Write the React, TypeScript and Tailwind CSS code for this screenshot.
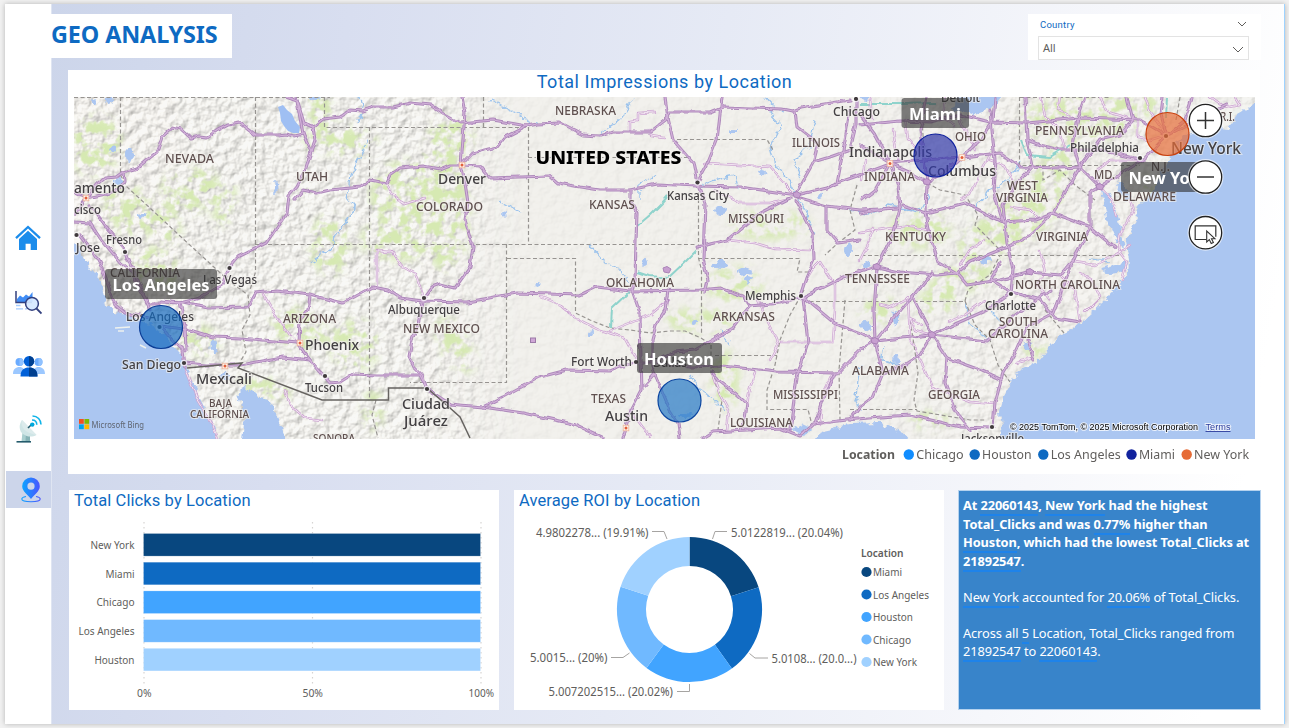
import React from "react";

type Label = [string, number, number, number, number];

const SEGOE = "'Noto Sans', 'Open Sans', sans-serif";
const DIN = "font-['Roboto','Noto_Sans',sans-serif]";
const UI = "font-['Noto_Sans','Open_Sans',sans-serif]";

const STATES: Label[] = [
  ["NEVADA", 165, 163, 49, 12],
  ["UTAH", 296, 181, 32, 12],
  ["CALIFORNIA", 110, 277, 70, 12],
  ["ARIZONA", 283, 323, 53, 12],
  ["NEW MEXICO", 403, 333, 77, 12],
  ["COLORADO", 416, 211, 67, 12],
  ["BAJA", 209, 407, 23, 10],
  ["CALIFORNIA", 190, 418, 59, 10],
  ["SONORA", 313, 442, 42, 10.5],
  ["NEBRASKA", 555, 115, 61, 12],
  ["KANSAS", 589, 209, 46, 12],
  ["MISSOURI", 728, 223, 56, 12],
  ["OKLAHOMA", 606, 287, 68, 12],
  ["ARKANSAS", 713, 321, 62, 12],
  ["TEXAS", 591, 403, 35, 12],
  ["MISSISSIPPI", 773, 399, 65, 12],
  ["LOUISIANA", 730, 427, 63, 12],
  ["ILLINOIS", 792, 147, 48, 12],
  ["INDIANA", 864, 181, 51, 12],
  ["OHIO", 955, 141, 31, 12],
  ["PENNSYLVANIA", 1035, 135, 89, 12],
  ["MD.", 1094, 179, 21, 12],
  ["N.J.", 1151, 171, 19, 12],
  ["DELAWARE", 1113, 201, 63, 12],
  ["R.I.", 1220, 121, 15, 12],
  ["WEST", 1007, 190, 31, 12],
  ["VIRGINIA", 996, 202, 52, 12],
  ["KENTUCKY", 885, 241, 61, 12],
  ["VIRGINIA", 1036, 241, 52, 12],
  ["TENNESSEE", 845, 283, 65, 12],
  ["NORTH CAROLINA", 1015, 289, 105, 12],
  ["SOUTH", 999, 326, 39, 12],
  ["CAROLINA", 988, 338, 60, 12],
  ["ALABAMA", 852, 375, 57, 12],
  ["GEORGIA", 928, 399, 52, 12],
];

const CITIES: Label[] = [
  ["amento", 74, 192.5, 51, 14],
  ["cisco", 74, 214, 27, 12],
  ["Fresno", 106, 244, 36, 12],
  ["Jose", 76, 252, 24, 12],
  ["Las Vegas", 203, 284, 54, 12],
  ["Los Angeles", 126, 321, 68, 12],
  ["San Diego", 122, 369, 59, 12],
  ["Mexicali", 196, 384, 56, 14.5],
  ["Phoenix", 305, 350, 54, 14.5],
  ["Tucson", 305, 392, 38, 12],
  ["Albuquerque", 388, 314, 72, 12],
  ["Ciudad", 402, 409, 48, 14.5],
  ["Juárez", 404, 426, 44, 14.5],
  ["Denver", 438, 184, 48, 14.5],
  ["Kansas City", 667, 200, 62, 12],
  ["Memphis", 745, 300, 51, 12],
  ["Fort Worth", 571, 366, 61, 12],
  ["Dallas", 653, 367, 34, 12],
  ["Austin", 605, 421, 43, 14.5],
  ["Chicago", 833, 116, 47, 12],
  ["Indianapolis", 849, 157, 83, 14],
  ["Detroit", 941, 102, 39, 12],
  ["Columbus", 928, 176, 68, 14],
  ["Philadelphia", 1070, 152, 69, 12],
  ["New York", 1171, 154, 70, 15.5],
  ["Charlotte", 985, 310, 51, 12],
  ["Jacksonville", 961, 443, 63, 12],
];

const DOTS: [number, number][] = [
  [76.5, 235], [125, 252], [229.5, 268], [424, 298], [184, 363], [325, 376], [427, 389],
  [697.5, 182.5], [636, 362], [801, 296], [1011, 294], [992, 427], [856, 99], [1140, 158], [159.5, 327], [1166, 136],
];

const CAPITALS: [number, number][] = [
  [86, 198], [300, 343], [225, 366], [462, 165], [890, 163.5], [962, 157.5], [626, 428],
];

const HIGHWAYS = [
  "74,215 86,198 98,184 105,178 117,177 124,172 137,168 157,152 162,137 173,127 181,129 191,138 200,136 207,137 218,130 228,125 240,123 247,128 256,135 278,135 286,134 295,136 303,134",
  "74,192 86,198 110,193 125,183 124,172",
  "286,97 297,101 303,134 311,152 305,172 297,187 289,196 287,213 276,228 275,230 266,243 250,251 238,257 229,268 222,285 200,298 180,303 162,301",
  "296,97 300,110 304,123 313,127 315,140 311,152",
  "304,123 313,127 323,119 340,117 350,110 362,111 374,107 393,107 410,103 430,105 445,115 460,123 493,120 527,126 537,124 560,123 583,135 600,136 613,132 650,132 668,118 670,112 710,112 722,107 783,109 793,111 800,108 850,100",
  "295,200 304,190 317,193 330,190 360,187 370,180 386,183 390,175 400,168 423,166 440,169 450,165 462,165 480,166 490,178 550,176 558,183 580,187 600,190 630,190 657,184 677,185 697,186 740,187 783,193 797,195 827,188 837,183 860,175 890,164",
  "462,97 465,113 461,165 465,183 468,203 465,220 473,247 470,267 455,288 440,284 432,287 424,298 418,325 412,340 409,357 414,367 422,375 427,389",
  "462,163 472,153 497,147 505,137 527,126",
  "160,302 183,303 207,308 247,307 255,293 277,291 310,295 343,303 373,287 388,290 400,298 424,301 467,302 517,293 580,295 597,287 630,291 700,290 720,288 743,296 750,306 780,303 803,297 843,277 877,267 900,272 937,275 957,273 967,285 1000,280 1030,272 1060,275 1073,260",
  "74,222 90,223 100,238 120,262 132,272 140,290 148,304 160,304",
  "80,235 92,250 102,268 108,285 115,305 125,313 150,318",
  "90,205 105,225 125,250 140,285 150,310",
  "160,325 183,328 213,337 240,338 297,343 310,360 323,375 330,383 340,382 353,374 377,375 420,375 427,389 450,404 483,407 523,413 573,424 603,438",
  "184,363 207,365 240,365 283,357 310,360",
  "310,296 308,310 300,320 299,343",
  "162,328 172,340 183,350 185,368",
  "180,303 185,325 186,350",
  "483,407 503,397 540,377 567,370 610,371 633,362 655,362 690,367 723,366 777,372 837,373 860,350 875,341 930,335 987,310 1011,292",
  "630,190 630,200 637,213 636,240 635,280 632,290 640,313 641,360 642,390 630,413 623,438",
  "668,290 665,310 656,325 652,340 652,367 670,410 678,423 680,438",
  "655,362 675,352 695,350 712,340 733,328 745,312 750,306",
  "655,374 645,385",
  "697,247 727,240 760,213 790,198",
  "697,183 705,203 703,260 708,280 705,293",
  "722,97 717,140 707,165 697,183",
  "665,97 668,118 673,140 693,163 697,183",
  "795,195 813,163 818,143 797,127 795,111",
  "813,162 830,157 850,150 856,125 856,99",
  "795,200 813,233 814,260 806,278 800,296",
  "797,197 827,206 860,210 900,208",
  "827,206 827,230 838,243 860,240",
  "837,183 845,140 850,110",
  "803,297 808,343 797,377 790,430",
  "803,297 833,322 860,333 875,341 883,373 873,397 860,407 850,420",
  "835,373 825,395 815,424",
  "712,372 718,380 735,393 747,404 745,418 740,430",
  "703,438 713,432 780,428 800,436 813,424 847,420 880,417 910,415 960,427 991,428",
  "932,335 947,358 980,370 1002,380",
  "947,358 945,383 957,415 970,430",
  "932,335 987,341 1010,320 1030,305 1050,290",
  "932,335 913,297 933,272",
  "932,335 920,355 905,365 883,373",
  "875,341 874,310 877,267 893,235 900,208",
  "875,341 905,305 913,297",
  "993,428 995,403 1003,373 1017,350 1027,327 1053,313 1063,287 1073,260 1090,227 1090,193 1100,187 1143,160 1166,136 1200,118 1227,105",
  "860,115 875,135 890,163 898,185 900,208",
  "890,163 925,160 962,157 1000,153 1020,167 1060,168 1080,167 1100,187",
  "890,163 910,172 927,182 945,172 962,157 980,140 993,120 995,97",
  "927,182 926,213 903,206",
  "926,213 930,235 938,262 957,273",
  "927,97 920,130 927,180",
  "860,125 900,121 930,122 960,115 990,122 1027,123 1080,118 1140,120 1166,135",
  "926,213 965,203 1003,222",
  "1025,97 1027,140 1033,166 1015,185 1003,205 1007,243 1013,270 1011,293",
  "990,110 995,160 993,190 1003,222",
  "1127,97 1133,120 1120,135 1100,140 1080,167 1053,213 1030,235 1007,247 970,262 957,273",
  "1003,222 1035,220 1053,213 1090,227 1115,248",
  "1027,140 1040,145 1060,150 1100,150 1143,160",
  "1080,167 1073,145 1078,118 1085,97",
  "1011,293 990,280 1000,262",
  "1027,340 1034,360",
  "1011,292 1040,300 1055,318 1080,322",
  "860,145 890,163 875,190 862,200",
  "860,213 890,208",
  "1166,136 1160,115 1162,97",
  "1166,136 1185,120 1192,97",
];

const MINOR = [
  "264,295 275,315 290,335 300,345",
  "377,285 377,251 392,252 400,265 415,273 424,298",
  "386,183 395,198 405,204 425,198",
  "185,370 197,398 210,420 218,438",
  "285,390 290,405 305,418 322,420",
  "650,437 630,410",
  "541,297 560,305 575,318 600,330 625,338 637,360",
  "610,331 650,315 668,300",
  "705,163 740,165 770,167 785,185 795,195",
  "715,190 740,203 770,203 790,198",
  "727,240 755,243 775,249 810,250",
  "665,137 650,135 650,130",
  "630,130 630,122 637,121 637,113 655,112",
  "803,285 812,270 820,262 835,285 835,310 833,342",
  "780,342 833,342",
  "757,300 772,330 778,345 770,360",
  "712,373 720,395 728,410 726,430",
  "747,404 750,388 755,373",
  "820,425 822,395 833,373",
  "860,232 885,228 905,226 930,230",
  "880,305 890,308 905,300 908,297 910,340 925,370 932,388 970,402 995,404",
  "960,265 970,250 985,240",
  "860,260 870,240 875,228",
  "1040,250 1045,272 1038,285 1050,300",
  "1060,275 1075,290 1080,322",
  "1063,287 1060,300 1052,312",
  "1080,272 1092,280 1100,297 1085,312",
  "1073,262 1095,265 1110,258 1130,245",
  "1130,200 1133,212 1120,235 1118,250 1127,262 1122,280",
  "945,97 943,118 955,125",
  "870,97 872,118",
  "865,160 862,180",
  "893,130 898,160",
  "905,120 908,138 922,155",
  "960,120 975,150",
  "990,155 970,195 960,200",
  "1040,97 1045,115 1060,130 1065,150",
  "1060,97 1058,110 1075,118",
  "1100,97 1108,112 1133,120",
  "1145,97 1150,112 1166,135 1150,140 1138,138 1138,122",
  "1100,187 1095,172 1110,160 1143,160",
  "1100,187 1112,200 1116,215",
  "1010,207 1030,210 1038,218",
  "1013,180 1005,165 990,160",
  "948,322 965,315 985,300",
  "932,335 915,330 910,318 922,325",
  "1020,360 1034,358 1017,363",
  "1210,97 1225,108 1240,105 1235,97",
];

const BORDERS = [
  "74,97.5 330,97.5",
  "1020,97.5 1110,97.5",
  "120.5,97 120.5,175 127,187 150,208 180,236 228,280 248,295 250,315 242,330 246,352 240,362",
  "255.5,97 255.5,272 250,290",
  "324.5,97 324.5,127.5 430,127.5 528,127.5",
  "369.5,127 369.5,398",
  "255,244.5 697,244.5",
  "483.5,97 483.5,127",
  "528.5,127 528.5,244",
  "528,157.5 690,157.5",
  "506.5,244 506.5,382.5 410,382.5",
  "507,258.5 575.5,258.5 575.5,313 590,320 610,328 630,330 650,333 670,331 685,331 701,338 712,345",
  "677,139.5 767,139.5 773,150",
  "698.5,186 698.5,258 701.5,270 701.5,335",
  "698,258.5 800,258.5 797,272 808,272",
  "711,345 711,373 722,400 718,430",
  "715,355.5 777,355.5",
  "804,290 790,315 780,340 775,365 767,390 767,409.5 808,409.5 812,425",
  "845,300 839,370 840,420",
  "803,301.5 965,301.5",
  "907,301 914,345 918,373 914,400 917,411 970,420 985,420",
  "850,409.5 917,409.5",
  "965,301 975,325 990,340 998,365 1010,382",
  "1045,310 1064,333",
  "855,255.5 1120,255.5",
  "1019.5,97 1019.5,165.5 1140,165.5",
  "965,301 968,290 990,275 1000,255",
  "857,185 850,210 855,230 838,243 825,255",
  "927,183 940,190 965,195 978,215 975,225 1000,250",
  "922,120 925,165",
  "1043,165 1043,180 1060,170 1075,185 1095,200",
  "1180,97 1176,120",
  "376,400 372,415 378,438",
];

const RIVERS = [
  "369,140 360,155 350,175 347,200 355,210 340,230 330,250 310,262",
  "359,97 362,112 357,122",
  "635,97 620,120 600,135",
  "540,125 510,110 490,100",
  "590,246 605,262 620,270 630,285",
  "640,200 640,183 655,175",
  "700,186 720,178 735,175 740,190",
  "768,112 780,125 770,145 775,165 790,180 795,195 805,210 815,235",
  "800,178 795,160 810,145 815,120",
  "765,97 775,108 785,112",
  "965,301 970,325 990,340",
  "850,210 870,214 890,205 920,212 930,195",
  "1020,160 1010,180 990,190 975,210",
  "720,330 730,345",
  "690,375 700,390 715,400 725,410",
  "884,345 882,360 900,365",
  "500,200 520,212",
  "1090,260 1110,262",
  "1000,320 990,310",
  "860,365 856,395 860,410",
];

const GREENS: [number, number, number, number, number][] = [
  [95, 145, 26, 30, 20], [130, 210, 30, 22, 45], [190, 190, 22, 30, 80], [225, 205, 10, 22, 15],
  [320, 110, 12, 20, 0], [340, 140, 38, 14, 5], [410, 195, 40, 35, 0], [445, 215, 25, 55, 0],
  [450, 140, 22, 25, 40], [400, 240, 40, 20, 0], [300, 330, 30, 20, 30], [355, 345, 25, 25, 0],
  [200, 340, 20, 14, 20], [155, 268, 25, 20, 30], [330, 245, 20, 30, 0], [265, 388, 28, 10, 10],
  [455, 345, 14, 30, -30], [770, 225, 40, 14, 0], [735, 285, 28, 18, 0], [960, 280, 35, 14, -20],
  [1010, 225, 60, 22, -30], [1045, 185, 50, 18, -55], [1080, 120, 60, 22, 0], [940, 300, 25, 14, -20],
  [1130, 105, 30, 14, 0], [700, 320, 35, 12, 0], [1035, 350, 12, 8, 0], [920, 230, 30, 18, 0],
  [880, 310, 20, 12, 0], [440, 180, 20, 40, 0], [930, 420, 20, 8, 0],
  [725, 380, 14, 30, 0], [373, 410, 10, 20, 0], [165, 225, 20, 14, 60], [1150, 190, 10, 14, 0],
];

const LAKES: [number, number, number, number][] = [
  [130, 155, 4, 6], [112, 149, 4, 2.5], [94, 101, 3, 3], [109, 100, 3, 4], [276, 188, 2.5, 6], [119, 182, 4, 3],
  [214, 346, 3.5, 7], [225, 375, 5, 3], [733, 131, 4, 2], [720, 210, 5, 4], [762, 172, 5, 3], [504, 213, 4, 1.5],
  [720, 265, 7, 4], [745, 272, 6, 4], [645, 262, 3, 4], [848, 250, 4, 6], [865, 326, 5, 4], [896, 360, 3, 3],
  [1028, 346, 4, 5], [896, 318, 3, 6], [867, 265, 3, 4], [695, 322, 3, 3], [538, 284, 2.5, 3], [820, 195, 3, 3],
  [987, 260, 5, 3], [685, 415, 6, 3], [592, 334, 3, 2], [748, 280, 5, 3], [141, 216, 3, 4], [315, 97, 5, 3],
];

function Road({ d, minor }: { d: string[]; minor?: boolean }) {
  return (
    <g fill="none" strokeLinejoin="round" strokeLinecap="round" filter="url(#wiggle)">
      {d.map((p, i) => (
        <polyline key={"o" + i} points={p} stroke={minor ? "#cda6d2" : "#ae8abb"} strokeWidth={minor ? 2.4 : 3.1} />
      ))}
      {d.map((p, i) => (
        <polyline key={"i" + i} points={p} stroke={minor ? "#f6ecf5" : "#d3b2da"} strokeWidth={minor ? 0.9 : 1.2} />
      ))}
    </g>
  );
}

function MapText({ items, fill }: { items: Label[]; fill: string }) {
  return (
    <g fontFamily={SEGOE} fill={fill} fontWeight="500" stroke="#f3f1ee" strokeWidth={2.2} strokeOpacity={0.6} paintOrder="stroke">
      {items.map(([t, x, y, w, s]) => (
        <text key={t + x} x={x} y={y} fontSize={s} textLength={w} lengthAdjust="spacingAndGlyphs">
          {t}
        </text>
      ))}
    </g>
  );
}

function Bubble({ x, y, fill, stroke }: { x: number; y: number; fill: string; stroke: string }) {
  return <circle cx={x} cy={y} r={21.5} fill={fill} fillOpacity={0.7} stroke={stroke} strokeWidth={1.2} />;
}

function Tag({ x, y, w, tx, tw, text }: { x: number; y: number; w: number; tx: number; tw: number; text: string }) {
  return (
    <g>
      <rect x={x} y={y} width={w} height={30} rx={3} fill="#303030" fillOpacity={0.62} />
      <text x={tx} y={y + 22} fontFamily={SEGOE} fontSize={16.5} fontWeight={700} fill="#fff" textLength={tw} lengthAdjust="spacingAndGlyphs">
        {text}
      </text>
    </g>
  );
}

function MapButton({ y, children }: { y: number; children: React.ReactNode }) {
  return (
    <g>
      <circle cx={1205.5} cy={y} r={18} fill="#fff" fillOpacity={0.6} />
      <circle cx={1205.5} cy={y} r={16.2} fill="#fff" stroke="#222" strokeWidth={1.3} />
      <g transform={`translate(1205.5 ${y})`} stroke="#333" strokeWidth={1.5} fill="none">
        {children}
      </g>
    </g>
  );
}

function UsMap() {
  return (
    <svg width="1181" height="342" viewBox="74 97 1181 342" className="block">
      <defs>
        <filter id="wiggle" x="-5%" y="-5%" width="110%" height="110%">
          <feTurbulence type="fractalNoise" baseFrequency="0.09" numOctaves="2" seed="4" result="n" />
          <feDisplacementMap in="SourceGraphic" in2="n" scale="5" xChannelSelector="R" yChannelSelector="G" />
        </filter>
        <filter id="coast" x="-5%" y="-5%" width="110%" height="110%">
          <feTurbulence type="fractalNoise" baseFrequency="0.12" numOctaves="3" seed="9" result="n" />
          <feDisplacementMap in="SourceGraphic" in2="n" scale="9" xChannelSelector="R" yChannelSelector="G" />
        </filter>
        <filter id="relief" x="0" y="0" width="100%" height="100%" colorInterpolationFilters="sRGB">
          <feTurbulence type="fractalNoise" baseFrequency="0.11" numOctaves="3" seed="12" result="n" />
          <feColorMatrix in="n" type="matrix" values="0 0 0 0 0  0 0 0 0 0  0 0 0 0 0  1 0 0 0 0" result="h" />
          <feDiffuseLighting in="h" surfaceScale="2.2" diffuseConstant="1.13" lightingColor="#f6f4f0">
            <feDistantLight azimuth="225" elevation="60" />
          </feDiffuseLighting>
        </filter>
        <filter id="forest" x="-20%" y="-20%" width="140%" height="140%" colorInterpolationFilters="sRGB">
          <feGaussianBlur in="SourceGraphic" stdDeviation="5" result="b" />
          <feTurbulence type="fractalNoise" baseFrequency="0.09" numOctaves="3" seed="5" result="n" />
          <feColorMatrix in="n" type="matrix" values="0 0 0 0 1  0 0 0 0 1  0 0 0 0 1  5 0 0 0 -2.2" result="m" />
          <feComposite in="b" in2="m" operator="in" />
        </filter>
        <linearGradient id="west" x1="0" x2="1">
          <stop offset="0" stopColor="#fff" stopOpacity="0.55" />
          <stop offset="0.3" stopColor="#fff" stopOpacity="0.5" />
          <stop offset="0.38" stopColor="#fff" stopOpacity="0.08" />
          <stop offset="0.65" stopColor="#fff" stopOpacity="0.08" />
          <stop offset="0.78" stopColor="#fff" stopOpacity="0.3" />
          <stop offset="1" stopColor="#fff" stopOpacity="0.25" />
        </linearGradient>
        <mask id="reliefMask">
          <rect x="74" y="97" width="1181" height="342" fill="url(#west)" />
        </mask>
      </defs>
      <rect x="74" y="97" width="1181" height="342" fill="#f1f0ec" />
      <g mask="url(#reliefMask)">
        <rect x="74" y="97" width="1181" height="342" filter="url(#relief)" />
      </g>
      <g filter="url(#forest)" fill="#d6e9b2">
        {GREENS.map(([x, y, rx, ry, a], i) => (
          <ellipse key={i} cx={x} cy={y} rx={rx} ry={ry} transform={`rotate(${a} ${x} ${y})`} />
        ))}
      </g>
      <g fill="#abc6f1" filter="url(#coast)">
        <path d="M60 240L76 245L90 268L102 283L106 303L115 313L135 316L152 326L166 337L180 352L187 370L198 395L210 418L222 450H60Z" />
        <path d="M238 391L247 388L257 398L270 400L280 420L290 450H241L245 415Z" />
        <path d="M1270 98L1240 112L1228 128L1205 126L1172 143L1170 158L1160 175L1152 192L1140 205L1132 228L1126 243L1129 260L1128 275L1110 297L1093 312L1073 330L1057 337L1040 360L1017 373L1005 393L999 413L1005 455H1270Z" />
        <path d="M1102 190L1110 196L1120 225L1125 250L1117 243L1108 222Z" />
        <path d="M1115 185L1122 182L1130 196L1126 200Z" />
        <path d="M1100 268L1128 262L1126 272L1108 274Z" />
        <path d="M810 450L822 430L850 424L880 423L902 432L918 450Z" />
        <path d="M792 430L803 424L812 428L804 436Z" />
        <path d="M952 108L972 116L990 109L1008 90H960Z" />
        <path d="M862 90L872 90L868 101L860 100Z" />
        {LAKES.map(([x, y, rx, ry], i) => (
          <ellipse key={i} cx={x} cy={y} rx={rx} ry={ry} />
        ))}
      </g>
      <path d="M278 107L283 105L287 110L292 114L295 121L300 127L299 133L293 133L288 131L284 126L281 121L280 113Z" fill="#9fbff3" />
      <g fill="none" stroke="#9cc3ec" strokeWidth="1.3" filter="url(#coast)">
        {RIVERS.map((p) => (
          <polyline key={p} points={p} />
        ))}
      </g>
      <g fill="none" stroke="#8fd3cc" strokeWidth="2" filter="url(#wiggle)">
        <polyline points="637,226 650,215 662,203 668,196" />
        <polyline points="638,272 650,276 668,278 685,262 697,250" />
        <polyline points="629,292 612,308 611,328" />
        <polyline points="860,104 900,104 935,103" />
        <polyline points="1021,140 1027,155 1050,157 1070,145" />
        <polyline points="1167,97 1166,118" />
      </g>
      <path d="M115 328L130 327M118 331H124M140 345L146 348" stroke="#eef1ee" strokeWidth="1.6" />
      <path d="M1200 124L1225 118L1240 110" stroke="#eef1ee" strokeWidth="4" fill="none" />
      <g fill="none" stroke="#979491" strokeWidth="1.2" strokeDasharray="4 2.5">
        {BORDERS.map((p) => (
          <polyline key={p} points={p} />
        ))}
      </g>
      <Road d={MINOR} minor />
      <Road d={HIGHWAYS} />
      <polyline
        points="187,368 242,363 238,368 322,400 388.5,400 388.5,388 427,388 450,408 460,417 470,438"
        fill="none"
        stroke="#666360"
        strokeWidth="1.5"
      />
      <g fill="#c79fd0" stroke="#a982b6">
        {[[797, 195], [932, 335], [875, 341], [667, 270], [877, 267], [1100, 187], [1030, 272], [927, 182]].map(([x, y]) => (
          <path key={x} d={`M${x - 4} ${y - 2}L${x} ${y - 3.5}L${x + 4} ${y - 1}L${x + 2} ${y + 3}L${x - 3} ${y + 2}Z`} strokeWidth="1" />
        ))}
      </g>
      <rect x="530.5" y="338" width="5" height="4.5" fill="#cfa6d6" stroke="#9c7aa8" />
      {DOTS.map(([x, y]) => (
        <g key={x}>
          <circle cx={x} cy={y} r={3.3} fill="#fff" fillOpacity={0.7} />
          <circle cx={x} cy={y} r={2.1} fill="#3f3a3c" />
        </g>
      ))}
      {CAPITALS.map(([x, y]) => (
        <g key={x}>
          <rect x={x - 2.8} y={y - 2.8} width="5.6" height="5.6" fill="#fff3ea" stroke="#eeb49a" strokeWidth="0.8" />
          <circle cx={x} cy={y} r={1.5} fill="#e2603c" />
        </g>
      ))}
      <MapText items={STATES} fill="#5f504f" />
      <MapText items={CITIES} fill="#434043" />
      <text x="535.5" y="164" fontFamily={SEGOE} fontSize="17" fontWeight="800" fill="#000" stroke="#f3f1ee" strokeWidth="2" paintOrder="stroke" textLength="146" lengthAdjust="spacingAndGlyphs">
        UNITED STATES
      </text>

      <Bubble x={161} y={327} fill="#1368bd" stroke="#0a3c96" />
      <Bubble x={679.5} y={400.5} fill="#2477c4" stroke="#0b45a0" />
      <Bubble x={935.5} y={155.5} fill="#3038a8" stroke="#12239e" />
      <Bubble x={1167.5} y={134} fill="#e66c37" stroke="#c8400e" />
      <Tag x={105} y={269} w={112} tx={112.5} tw={97} text="Los Angeles" />
      <Tag x={637} y={343} w={85} tx={644} tw={70} text="Houston" />
      <Tag x={901.5} y={98} w={67.5} tx={909} tw={52} text="Miami" />
      <Tag x={1121} y={162} w={93} tx={1128.5} tw={79} text="New York" />

      <MapButton y={120.5}>
        <path d="M-8.5 0H8.5M0 -8.5V8.5" />
      </MapButton>
      <MapButton y={177}>
        <path d="M-8.5 0H8.5" />
      </MapButton>
      <MapButton y={232.7}>
        <path d="M1 6.8H-10.3V-6.8H10.3V4" strokeWidth="1.2" />
        <path d="M1.2 -1.6V9.3L3.8 6.9L5.7 10.8L7.9 9.7L6 6H9.4Z" fill="#fff" strokeWidth="1.1" />
      </MapButton>

      <path d="M79 419h4.8v4.8H79z" fill="#f25022" />
      <path d="M84.4 419h4.8v4.8h-4.8z" fill="#7fba00" />
      <path d="M79 424.4h4.8v4.8H79z" fill="#00a4ef" />
      <path d="M84.4 424.4h4.8v4.8h-4.8z" fill="#ffb900" />
      <text x="91.5" y="428" fontFamily={SEGOE} fontSize="9" fill="#5f6570" textLength="52.5" lengthAdjust="spacingAndGlyphs">
        Microsoft Bing
      </text>
      <g fontFamily="'Liberation Sans', Arial, sans-serif" fontSize="9.6" stroke="#fff" strokeWidth="2" strokeOpacity="0.75" paintOrder="stroke">
        <text x="1010" y="430" fill="#000" textLength="188" lengthAdjust="spacingAndGlyphs">
          © 2025 TomTom, © 2025 Microsoft Corporation
        </text>
        <text x="1205.5" y="430" fill="#2b3c9c" textLength="25" lengthAdjust="spacingAndGlyphs">
          Terms
        </text>
      </g>
      <path d="M1205.5 431.5H1230.5" stroke="#2b3c9c" strokeWidth="0.9" />
    </svg>
  );
}

function Sidebar() {
  return (
    <nav className="flex w-[46px] shrink-0 flex-col bg-white pt-[216px]">
      <div className="flex h-[36px] items-center justify-center">
        <svg width="26" height="26" viewBox="0 0 26 26">
          <path d="M1 13.2L13 2L25 13.2" fill="none" stroke="#1b8ceb" strokeWidth="2.3" />
          <path d="M13 5.8L22 14V25H15.7V18.8H10.6V25H4V14Z" fill="#1b8ceb" />
        </svg>
      </div>
      <div className="mt-[28px] flex h-[36px] items-center justify-center">
        <svg width="27" height="25" viewBox="0 0 27 25">
          <path d="M2 12V9L5 5.5L8 7.5L11 4.5L14 6.5L17.5 2V12Z" fill="#3f8cf5" />
          <path d="M1 1V12.5H17" fill="none" stroke="#33407e" strokeWidth="1.5" />
          <path d="M1 15.5H5.5M1 18.8H8M10 18.8H12" stroke="#a5ccff" strokeWidth="1.3" />
          <circle cx="17" cy="13.8" r="6.4" fill="#d6e8ff" fillOpacity="0.93" stroke="#33407e" strokeWidth="1.5" />
          <path d="M21.5 18.5L26.5 23.5" stroke="#33407e" strokeWidth="1.8" />
        </svg>
      </div>
      <div className="mt-[28px] flex h-[36px] items-center justify-center pl-[2px]">
        <svg width="32" height="22" viewBox="0 0 32 22">
          <circle cx="6.5" cy="7" r="4" fill="#6aabff" />
          <circle cx="25.5" cy="7" r="4" fill="#6aabff" />
          <path d="M0 19C0 14 3 12 6.5 12S12 14 12 19ZM20 19C20 14 22 12 25.5 12S32 14 32 19Z" fill="#9cc8ff" />
          <path d="M6.5 3A4 4 0 0 1 6.5 11ZM25.5 3A4 4 0 0 1 25.5 11Z" fill="#8fc1ff" />
          <path d="M7.5 21.5C7.5 15 11 12.5 16 12.5S24.5 15 24.5 21.5Z" fill="#0060d8" />
          <path d="M16 12.5C21 12.5 24.5 15 24.5 21.5H16Z" fill="#003f8f" />
          <circle cx="16" cy="6.2" r="5.2" fill="#0060d8" />
          <path d="M16 1A5.2 5.2 0 0 1 16 11.4Z" fill="#003f8f" />
        </svg>
      </div>
      <div className="mt-[27px] flex h-[36px] items-center justify-center pl-[2px]">
        <svg width="26" height="28" viewBox="0 0 26 28">
          <path d="M6.5 17H11L12.5 26.5H5.5Z" fill="#a9cfd0" />
          <path d="M10 17L14 19V26.5H9.5Z" fill="#86b3b6" />
          <path d="M6 5C2.5 10 3 16 7 19C11 22 16 22.5 20.5 20Z" fill="#cfe5e6" />
          <path d="M6 5C4 12 9 18 20.5 20Z" fill="#dcebec" />
          <path d="M12 13L16 9" stroke="#245b6c" strokeWidth="1.6" />
          <circle cx="16.3" cy="9.6" r="2.2" fill="#00a8dc" />
          <path d="M16 5C19 5 20.8 7 20.8 9.8M16.5 1C21.5 1 25 4.8 25 9.5" fill="none" stroke="#10b4e8" strokeWidth="1.6" />
          <path d="M0.5 26.8H15" stroke="#245b6c" strokeWidth="1.6" />
        </svg>
      </div>
      <div className="mt-[24px] ml-px flex h-[37px] items-center justify-center bg-[#ccd5ea] pl-[4px]">
        <svg width="20" height="26" viewBox="0 0 20 26">
          <defs>
            <linearGradient id="pin" x1="0" x2="1">
              <stop offset="0" stopColor="#0ca4ff" />
              <stop offset="1" stopColor="#4a54ff" />
            </linearGradient>
          </defs>
          <path d="M5 19.5C2.5 20 0.8 21 0.8 22C0.8 23.6 5 24.7 10 24.7S19.2 23.6 19.2 22C19.2 21 17.5 20 15 19.5" fill="none" stroke="url(#pin)" strokeWidth="1.1" />
          <path fillRule="evenodd" d="M10 0.5A8.8 8.8 0 0 0 1.2 9.3C1.2 14.5 7 18 10 22C13 18 18.8 14.5 18.8 9.3A8.8 8.8 0 0 0 10 .5ZM10 5.6A3.6 3.6 0 1 1 10 12.8A3.6 3.6 0 0 1 10 5.6Z" fill="url(#pin)" />
        </svg>
      </div>
    </nav>
  );
}

const BARS = [
  { name: "New York", color: "#08477f", w: 44 },
  { name: "Miami", color: "#0e6ac2", w: 29 },
  { name: "Chicago", color: "#41a4ff", w: 38 },
  { name: "Los Angeles", color: "#70b9ff", w: 56 },
  { name: "Houston", color: "#a0d1ff", w: 40 },
];

function BarChart() {
  return (
    <svg width="430" height="196" viewBox="69 514 430 196" className="block" fontFamily={SEGOE} fontSize="10.7" fill="#605e5c">
      <g stroke="#d6d4d2" strokeWidth="1.2" strokeDasharray="1.4 3.6">
        <path d="M144 522V684M312.5 522V684M481 522V684" />
      </g>
      {BARS.map((b, i) => (
        <g key={b.name}>
          <rect x="143.5" y={533.5 + i * 28.7} width="337" height="22.6" fill={b.color} stroke="#fff" strokeOpacity="0.35" strokeWidth="0.6" />
          <text x={134.5 - b.w} y={549 + i * 28.7} textLength={b.w} lengthAdjust="spacingAndGlyphs">
            {b.name}
          </text>
        </g>
      ))}
      <text x="137" y="697" textLength="14.5" lengthAdjust="spacingAndGlyphs">0%</text>
      <text x="302.5" y="697" textLength="20.5" lengthAdjust="spacingAndGlyphs">50%</text>
      <text x="468.5" y="697" textLength="25.5" lengthAdjust="spacingAndGlyphs">100%</text>
    </svg>
  );
}

const SLICES = [
  { name: "Miami", color: "#08477f", pct: 20.04, w: 29 },
  { name: "Los Angeles", color: "#0e6ac2", pct: 20.03, w: 56 },
  { name: "Houston", color: "#41a4ff", pct: 20.02, w: 40 },
  { name: "Chicago", color: "#70b9ff", pct: 20, w: 38 },
  { name: "New York", color: "#a0d1ff", pct: 19.91, w: 44 },
];

function arc(from: number, to: number) {
  const cx = 689.5;
  const cy = 609.5;
  const at = (f: number, r: number) => {
    const a = f * 2 * Math.PI - Math.PI / 2;
    return `${(cx + r * Math.cos(a)).toFixed(2)} ${(cy + r * Math.sin(a)).toFixed(2)}`;
  };
  return `M${at(from, 72.6)}A72.6 72.6 0 0 1 ${at(to, 72.6)}L${at(to, 43.5)}A43.5 43.5 0 0 0 ${at(from, 43.5)}Z`;
}

const CALLOUTS: [string, number, number, number][] = [
  ["4.9802278... (19.91%)", 536, 537, 112.5],
  ["5.0122819... (20.04%)", 731, 537, 112],
  ["5.0015... (20%)", 530, 662, 77.5],
  ["5.0108... (20.0...)", 771.5, 663, 85],
  ["5.007202515... (20.02%)", 548.5, 696, 124.5],
];

function DonutChart() {
  let sum = 0;
  return (
    <svg width="430" height="196" viewBox="514 514 430 196" className="block" fontFamily={SEGOE} fontSize="12" fill="#605e5c">
      {SLICES.map((s) => {
        const from = sum / 100;
        sum += s.pct;
        return <path key={s.name} d={arc(from, sum / 100)} fill={s.color} />;
      })}
      <g fill="none" stroke="#a6a4a2" strokeWidth="1">
        <path d="M652 531.5H664L667 539M727 531.5H715L712.5 539M611 657.5H623L629.5 653M768 658H755L749.5 653.5M677 691.5H689.5V684" />
      </g>
      {CALLOUTS.map(([t, x, y, w]) => (
        <text key={t} x={x} y={y} textLength={w} lengthAdjust="spacingAndGlyphs">
          {t}
        </text>
      ))}
      <text x="861" y="556.5" fontSize="10.8" fontWeight="600" textLength="42.5" lengthAdjust="spacingAndGlyphs">
        Location
      </text>
      {SLICES.map((s, i) => (
        <g key={s.name} fontSize="10.8">
          <circle cx="866.5" cy={572 + i * 22.5} r="5.1" fill={s.color} />
          <text x="873" y={576 + i * 22.5} textLength={s.w} lengthAdjust="spacingAndGlyphs">
            {s.name}
          </text>
        </g>
      ))}
    </svg>
  );
}

function Legend() {
  return (
    <svg width="412" height="24" viewBox="840 443 412 24" className="mr-[4px] block self-end" fontFamily={SEGOE} fontSize="12.8" fill="#605e5c">
      <text x="843" y="459" fontWeight="700" fontSize="12.6" textLength="53" lengthAdjust="spacingAndGlyphs">Location</text>
      {(
        [
          ["Chicago", 909.8, 47.5, "#118dff"],
          ["Houston", 975.7, 49.5, "#0e6ac2"],
          ["Los Angeles", 1044.3, 70, "#0e6ac2"],
          ["Miami", 1132.5, 36, "#12239e"],
          ["New York", 1187.7, 55, "#e66c37"],
        ] as [string, number, number, string][]
      ).map(([t, x, w, c]) => (
        <g key={t}>
          <circle cx={x} cy={454.5} r={5.2} fill={c} />
          <text x={x + 7.4} y={459} textLength={w} lengthAdjust="spacingAndGlyphs">
            {t}
          </text>
        </g>
      ))}
    </svg>
  );
}

function V({ children }: { children: React.ReactNode }) {
  return <span className="border-b-2 border-[#1e83ea]">{children}</span>;
}

export default function App() {
  return (
    <div className={`h-[728px] w-[1289px] overflow-hidden bg-[#f1f1f1] pt-[4px] pl-[5px] ${UI}`}>
      <div className="flex h-[720px] w-[1280px] border-r border-[#9fd3ff] bg-white shadow-[0_0_5px_rgba(0,0,0,0.25)]">
        <Sidebar />
        <main className="flex min-w-0 flex-1 flex-col border-l border-[#dfe5f2] bg-[linear-gradient(100deg,#ccd5ea_0%,#d8def0_22%,#e6eaf5_50%,#f6f7fb_78%,#ffffff_94%)]">
          <header className="flex h-[66px] items-start justify-between pt-[10px] pr-[23px]">
            <h1 className="-ml-px flex h-[44px] w-[181px] items-center bg-white text-[23.4px] leading-none font-bold tracking-[-0.12px] whitespace-nowrap text-[#0e6ac2]">
              <span className="-mt-[2px]">GEO ANALYSIS</span>
            </h1>
            <div className="flex h-[46px] w-[233px] flex-col bg-white pl-[10px]">
              <div className={`flex h-[22px] items-center justify-between pr-[14px] pl-[2px] text-[9.5px] tracking-[0.25px] text-[#0e6ac2] ${DIN}`}>
                <span>Country</span>
                <svg width="10" height="6" viewBox="0 0 10 6" className="mb-[3px]">
                  <path d="M1 1L5 5L9 1" fill="none" stroke="#605e5c" />
                </svg>
              </div>
              <div className="flex h-[24px] w-[211px] items-center justify-between border border-[#e3e3e3] pr-[4px] pl-[4px] text-[11px] text-[#605e5c]">
                <span className="mt-px">All</span>
                <svg width="12" height="7" viewBox="0 0 12 7" className="mt-[2px]">
                  <path d="M1 1L6 6L11 1" fill="none" stroke="#605e5c" />
                </svg>
              </div>
            </div>
          </header>

          <section className="ml-[16px] flex h-[404px] w-[1192px] flex-col bg-white pr-[5px] pl-[6px]">
            <h2 className={`flex h-[27px] items-center justify-center pb-[4px] text-[18px] tracking-[0.52px] text-[#0e6ac2] ${DIN}`}>
              Total Impressions by Location
            </h2>
            <UsMap />
            <div className="flex flex-col pt-[4px]">
              <Legend />
            </div>
          </section>

          <div className="mt-[16px] ml-[17px] flex h-[220px] gap-[15px]">
            <section className="flex w-[430px] flex-col bg-white">
              <h2 className={`h-[24px] pl-[5px] text-[16.5px] leading-[21px] tracking-[0.1px] whitespace-nowrap text-[#0e6ac2] ${DIN}`}>
                Total Clicks by Location
              </h2>
              <BarChart />
            </section>
            <section className="flex w-[430px] flex-col bg-white">
              <h2 className={`h-[24px] pl-[5px] text-[16.5px] leading-[21px] tracking-[0.12px] whitespace-nowrap text-[#0e6ac2] ${DIN}`}>
                Average ROI by Location
              </h2>
              <DonutChart />
            </section>
            <section className="-ml-px w-[303px] border border-[#b5d2ee] bg-[#3884ca] pt-[5px] pl-[4px] text-[12.8px] leading-[18.3px] whitespace-nowrap text-white">
              <p className="text-[12.8px] leading-[18.6px] font-bold tracking-[-0.1px]">
                At <V>22060143</V>, <V>New York</V> had the highest
                <br />
                Total_Clicks and was <V>0.77%</V> higher than
                <br />
                <V>Houston</V>, which had the lowest Total_Clicks at
                <br />
                <V>21892547</V>.
              </p>
              <p className="mt-[18px] tracking-[-0.1px]">
                <V>New York</V> accounted for <V>20.06%</V> of Total_Clicks.
              </p>
              <p className="mt-[17px] tracking-[-0.1px]">
                Across all <V>5</V> Location, Total_Clicks ranged from
                <br />
                <V>21892547</V> to <V>22060143</V>.
              </p>
            </section>
          </div>
        </main>
      </div>
    </div>
  );
}
